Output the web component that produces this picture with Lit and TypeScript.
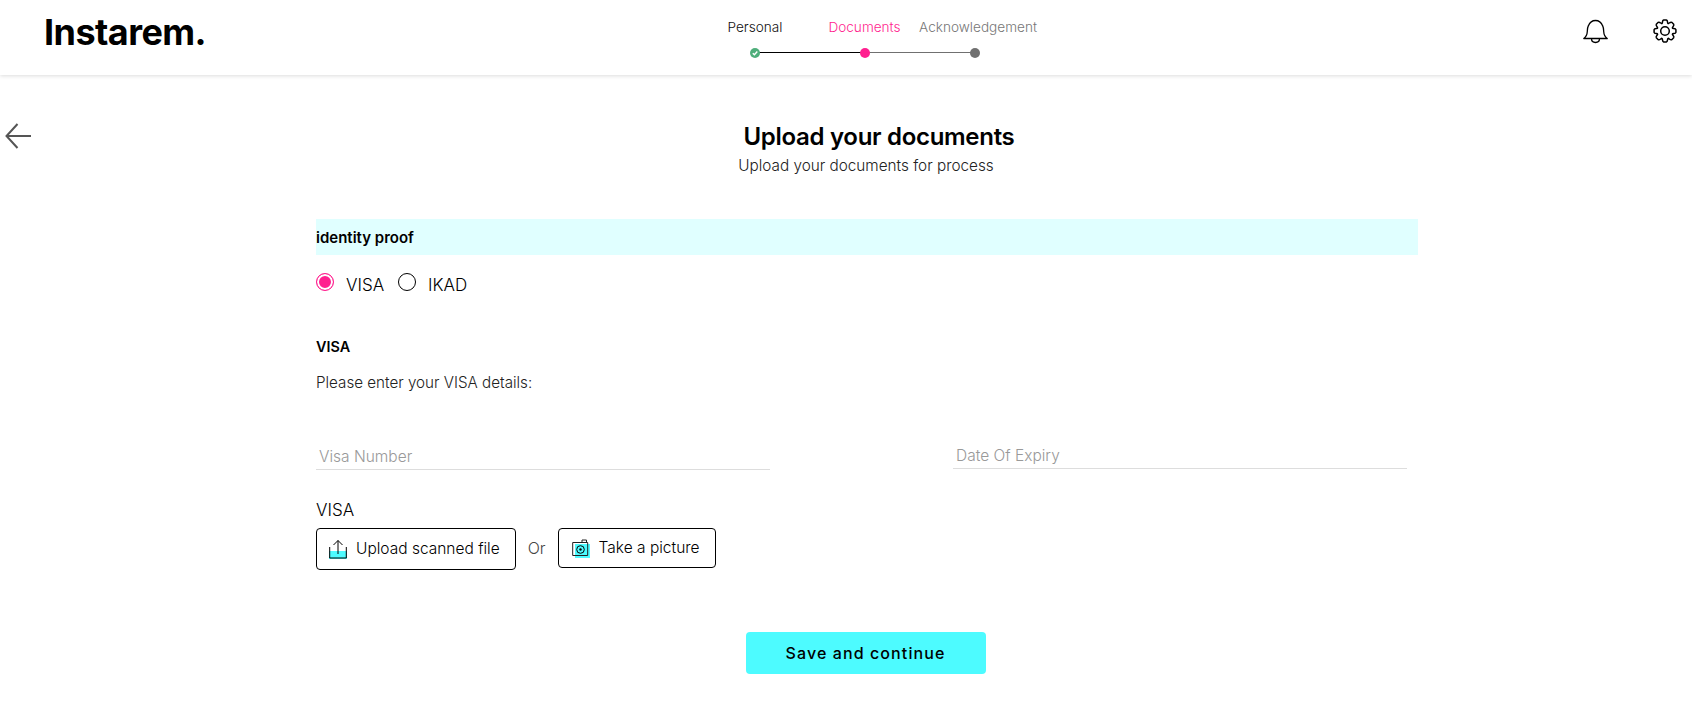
import { LitElement, html, css } from "lit";
import { customElement } from "lit/decorators.js";

function gearPath(cx: number, cy: number, rOut: number, rIn: number, teeth: number) {
  const pt = (a: number, r: number) => `${(cx + r * Math.cos(a)).toFixed(2)} ${(cy + r * Math.sin(a)).toFixed(2)}`;
  const step = (Math.PI * 2) / teeth;
  let d = "";
  for (let i = 0; i < teeth; i++) {
    const a = i * step - Math.PI / 2;
    const s = a - step * 0.5;
    d += i === 0 ? `M${pt(s, rIn)}` : "";
    d += `C${pt(a - step * 0.36, rIn)} ${pt(a - step * 0.36, rOut)} ${pt(a - step * 0.16, rOut)}`;
    d += `L${pt(a + step * 0.16, rOut)}`;
    d += `C${pt(a + step * 0.36, rOut)} ${pt(a + step * 0.36, rIn)} ${pt(a + step * 0.5, rIn)}`;
  }
  return d + "Z";
}

@customElement("app-root")
export class AppRoot extends LitElement {
  static styles = css`
    :host { display: block; width: 1692px; height: 717px; overflow: hidden; background: #fff; color: #000; font-family: "Inter", "Liberation Sans", sans-serif; font-size: 15px; }
    * { box-sizing: border-box; }
    header { height: 75px; display: grid; grid-template-columns: 700px 330px 1fr; box-shadow: 0 1px 4px rgba(0,0,0,.14); }
    .logo { font-size: 36px; font-weight: 700; letter-spacing: -.55px; padding: 10px 0 0 44px; line-height: 44px; }
    .steps { display: grid; grid-template-columns: repeat(3, 110px); padding-top: 18px; }
    .step { display: flex; flex-direction: column; align-items: center; white-space: nowrap; font-size: 13.6px; color: #777; font-weight: 300; line-height: 18px; position: relative; }
    .step.done { color: #111; }
    .step.cur { color: #ff1f8f; }
    .step.cur span { margin-right: 1px; }
    .step.last span { margin-left: 6px; }
    .dot { width: 10px; height: 10px; border-radius: 50%; background: #707070; margin-top: 12px; position: relative; z-index: 1; }
    .step.cur .dot { background: #ff1f8f; }
    .step.done .dot { background: #4fae7b; display: flex; }
    .dot svg { display: block; }
    .line { position: absolute; height: 1px; top: 34px; left: 55px; width: 110px; background: #000; }
    .line.grey { background: #707070; }
    .icons { display: flex; justify-content: flex-end; gap: 45px; padding: 19px 15px 0 0; align-items: flex-start; }
    .body { display: grid; grid-template-columns: 316px 1102px; }
    .back { padding: 48px 0 0 5px; }
    main { display: flex; flex-direction: column; }
    h1 { margin: 45px 0 0; padding-left: 24px; text-align: center; font-size: 24px; font-weight: 600; line-height: 34px; letter-spacing: -.3px; }
    .sub { text-align: center; font-size: 15.3px; font-weight: 300; line-height: 20px; margin: 2px 2px 0 0; color: #222; }
    .band { margin-top: 43px; height: 36px; background: #e0ffff; font-weight: 600; font-size: 15px; line-height: 38px; }
    .radios { display: flex; align-items: center; margin-top: 15px; font-size: 17px; font-weight: 300; height: 30px; }
    .radio { width: 18px; height: 18px; border-radius: 50%; border: 1.5px solid #000; margin: -6px 12px 0 0; flex: none; }
    .radio.on { border-color: #ff1f8f; background: #ff1f8f; box-shadow: inset 0 0 0 2px #fff; }
    .radios span + .radio { margin-left: 14px; }
    h2 { margin: 37px 0 0; font-size: 14.4px; font-weight: 600; line-height: 20px; }
    .hint { margin-top: 16px; font-size: 15.2px; font-weight: 300; line-height: 20px; color: #222; }
    .fields { display: flex; margin-top: 51px; }
    .field { width: 454px; height: 26px; border-bottom: 1px solid #ddd; padding-left: 3px; color: #999; font-size: 15.5px; font-weight: 300; line-height: 26px; }
    .field + .field { margin-left: 183px; margin-top: -1px; }
    .lab { margin-top: 28px; font-size: 17px; font-weight: 300; line-height: 24px; }
    .btns { display: flex; align-items: flex-start; margin-top: 6px; }
    .btn { display: flex; align-items: center; height: 42px; border: 1px solid #000; border-radius: 4px; padding: 0 15px 0 12px; font-size: 15.5px; font-weight: 300; gap: 9px; }
    .btn span { margin-bottom: 2px; }
    .btn.two { height: 40px; padding: 0 15px 0 13px; }
    .or { margin: 10px 12px 0; color: #444; font-weight: 300; line-height: 20px; font-size: 16px; }
    .save { align-self: center; margin: 62px 3px 0 0; width: 240px; height: 42px; background: #4dfbff; border-radius: 4px; text-align: center; font-size: 16px; font-weight: 500; line-height: 42px; letter-spacing: 1.1px; }
  `;

  render() {
    return html`
      <header>
        <div class="logo">Instarem.</div>
        <div class="steps">
          <div class="step done"><span>Personal</span><div class="dot">
            <svg width="10" height="10" viewBox="0 0 10 10"><path d="M2.800 5.200 4.400 6.800 7.300 3.500" fill="none" stroke="#fff" stroke-width="1.400"/></svg>
          </div><div class="line"></div></div>
          <div class="step cur"><span>Documents</span><div class="dot"></div><div class="line grey"></div></div>
          <div class="step last"><span>Acknowledgement</span><div class="dot"></div></div>
        </div>
        <div class="icons">
          <svg width="25" height="26" viewBox="0 0 25 26" fill="none" stroke="#000" stroke-width="1.300" stroke-linejoin="round"><path d="M.8 19.500c2.500-1.800 3.300-3.500 3.500-7 .2-3 .2-4 1-5.600C6.500 4 9.200 1.500 12.500 1.500s6 2.500 7.200 5.400c.8 1.600.8 2.600 1 5.600.2 3.500 1 5.200 3.500 7Z"/><path d="M8.500 19.500c0 5.300 8 5.300 8 0"/></svg>
          <svg width="24" height="24" viewBox="0 0 24 24" fill="none" stroke="#000" stroke-width="1.500" stroke-linejoin="round"><circle cx="12" cy="12" r="4.300"/><path d=${gearPath(12, 12, 11, 8, 8)}/></svg>
        </div>
      </header>
      <div class="body">
        <div class="back">
          <svg width="26" height="26" viewBox="0 0 26 26" fill="none" stroke="#555" stroke-width="2"><path d="M12.500 1 1.500 13 12.500 25M1.500 13H26"/></svg>
        </div>
        <main>
          <h1>Upload your documents</h1>
          <div class="sub">Upload your documents for process</div>
          <div class="band">identity proof</div>
          <div class="radios"><div class="radio on"></div><span>VISA</span><div class="radio"></div><span>IKAD</span></div>
          <h2>VISA</h2>
          <div class="hint">Please enter your VISA details:</div>
          <div class="fields"><div class="field">Visa Number</div><div class="field">Date Of Expiry</div></div>
          <div class="lab">VISA</div>
          <div class="btns">
            <div class="btn">
              <svg width="18" height="20" viewBox="0 0 18 20" fill="none"><rect x="0" y="12" width="18" height="8" fill="#4dfbff"/><path d="M.7 8v11h16.600V8M9 15V1.500M4.500 6 9 1.500 13.500 6" stroke="#000" stroke-width="1"/></svg>
              <span>Upload scanned file</span>
            </div>
            <div class="or">Or</div>
            <div class="btn two">
              <svg width="18" height="19" viewBox="0 0 18 19" fill="none"><rect x="3" y="5" width="15" height="14" fill="#4dfbff"/><path d="M.7 3.500h15v13H.7zM10 3.500V1h4.500v2.500" stroke="#222" stroke-width="1"/><circle cx="8.500" cy="10.500" r="3.800" stroke="#000"/><circle cx="8.500" cy="10.500" r="1.200" fill="#000"/></svg>
              <span>Take a picture</span>
            </div>
          </div>
          <div class="save">Save and continue</div>
        </main>
      </div>
    `;
  }
}
